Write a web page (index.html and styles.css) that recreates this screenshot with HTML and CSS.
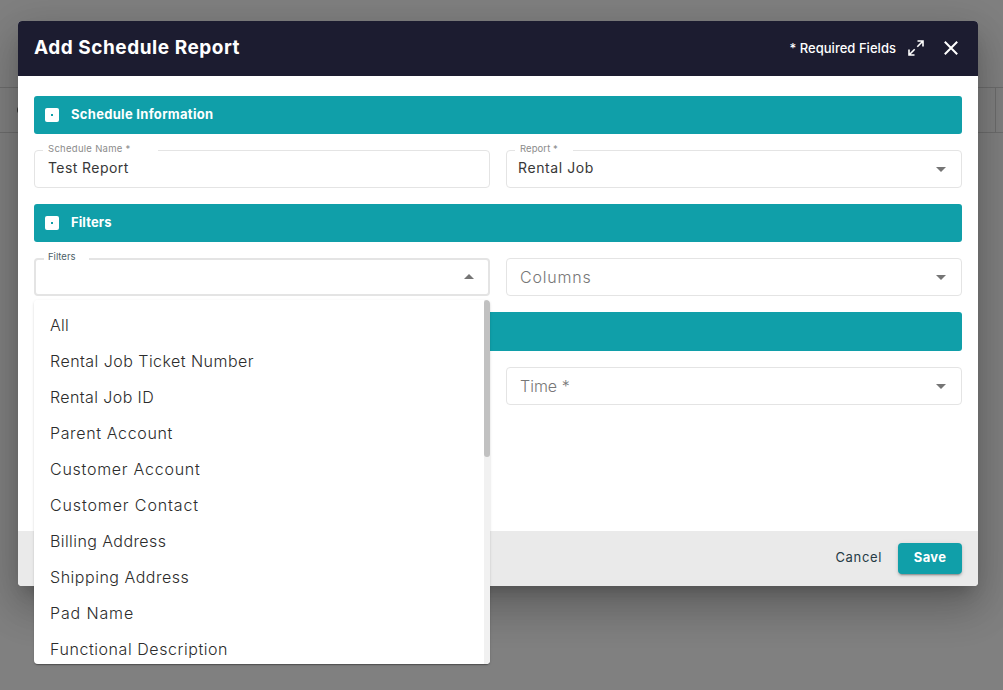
FILE: index.html
```html
<!DOCTYPE html>
<html lang="en">
<head>
<meta charset="utf-8">
<title>Add Schedule Report</title>
<link rel="stylesheet" href="styles.css">
</head>
<body>
<div class="page"><div class="page-toolbar"><span class="page-dot"></span><span class="page-cell"></span></div></div>
<main class="dialog">
  <header class="dialog-header">
    <h1 class="title">Add Schedule Report</h1>
    <span class="required">* Required Fields</span>
    <svg class="expand" viewBox="0 0 16 16"><path d="M9.500 1H15v5.500M15 1 9.300 6.700M6.500 15H1V9.500M1 15l5.700-5.700"/></svg>
    <svg class="close" viewBox="0 0 14 14"><path d="M.8.8l12.400 12.400M13.200.8.8 13.200"/></svg>
  </header>
  <div class="dialog-body">
    <h2 class="section"><span class="box"></span><span class="s-info">Schedule Information</span></h2>
    <div class="row">
      <div class="field"><label class="float w-name"><span class="l-name">Schedule Name *</span></label><span class="value v-name">Test Report</span></div>
      <div class="field"><label class="float w-report"><span class="l-report">Report *</span></label><span class="value select v-report">Rental Job</span><i class="arrow"></i></div>
    </div>
    <h2 class="section"><span class="box"></span><span class="s-filters">Filters</span></h2>
    <div class="row">
      <div class="field focused"><label class="float w-filters"><span class="l-filters">Filters</span></label><i class="arrow up"></i>
        <div class="menu">
          <ul class="options">
            <li><span class="o1">All</span></li>
            <li><span class="o2">Rental Job Ticket Number</span></li>
            <li><span class="o3">Rental Job ID</span></li>
            <li><span class="o4">Parent Account</span></li>
            <li><span class="o5">Customer Account</span></li>
            <li><span class="o6">Customer Contact</span></li>
            <li><span class="o7">Billing Address</span></li>
            <li><span class="o8">Shipping Address</span></li>
            <li><span class="o9">Pad Name</span></li>
            <li><span class="o10">Functional Description</span></li>
          </ul>
          <div class="track"><div class="thumb"></div></div>
        </div>
      </div>
      <div class="field"><span class="placeholder p-col">Columns</span><i class="arrow"></i></div>
    </div>
    <h2 class="section last"></h2>
    <div class="row">
      <div class="field"></div>
      <div class="field"><span class="placeholder p-time">Time *</span><i class="arrow"></i></div>
    </div>
  </div>
  <footer class="dialog-footer">
    <button class="cancel"><span>Cancel</span></button>
    <button class="save"><span>Save</span></button>
  </footer>
</main>
</body>
</html>
```
FILE: styles.css
```css
* { box-sizing: border-box; }
body { margin: 0; width: 1003px; height: 690px; overflow: hidden; background: #808080; font-family: Inter, "Open Sans", sans-serif; position: relative; }
.page { position: absolute; inset: 0; padding-top: 87px; }
.page-toolbar { height: 46px; border: solid #6d6d6d; border-width: 1px 0; display: flex; align-items: center; justify-content: space-between; }
.page-dot { width: 8px; height: 8px; margin-left: 17px; border-radius: 50%; background: #333; }
.page-cell { width: 8px; height: 44px; border-left: 1px solid #6d6d6d; }
.dialog { position: relative; width: 960px; height: 565px; margin: 21px 0 0 18px; display: flex; flex-direction: column; background: #fff; border-radius: 4px; box-shadow: 0 11px 15px -7px rgba(0,0,0,.2), 0 24px 38px 3px rgba(0,0,0,.14), 0 9px 46px 8px rgba(0,0,0,.12); }
.dialog-header { height: 55px; flex: none; display: flex; align-items: center; padding: 0 20px 2px 16px; background: #1c1c30; color: #fff; border-radius: 4px 4px 0 0; }
.title { margin: 0 auto 0 0; font-size: 19px; font-weight: 700; letter-spacing: .53px; white-space: nowrap; }
.required { font-size: 13px; font-weight: 500; margin-right: 12px; letter-spacing: .03px; white-space: nowrap; }
.expand { width: 16px; height: 16px; margin-right: 20px; fill: none; stroke: #fff; stroke-width: 1.600; }
.close { width: 14px; height: 14px; fill: none; stroke: #fff; stroke-width: 2; }
.dialog-body { flex: 1; padding: 20px 16px 0; display: flex; flex-direction: column; gap: 16px; }
.section { margin: 0; height: 38px; flex: none; display: flex; align-items: center; gap: 12px; padding: 0 11px; background: #109fa9; color: #fff; border-radius: 3px; font-size: 13px; font-weight: 700; white-space: nowrap; }
.s-info { letter-spacing: .3px; padding-bottom: 2px; }
.s-filters { letter-spacing: .1px; padding-bottom: 2px; }
.section.last { height: 39px; }
.box { width: 14px; height: 14px; background: #fff; border-radius: 2px; display: grid; place-items: center; }
.box::after { content: ""; width: 2px; height: 2px; background: #109fa9; }
.row { display: grid; grid-template-columns: 456px 456px; gap: 16px; }
.field { position: relative; height: 38px; border: 1px solid #e4e4e4; border-radius: 4px; display: flex; align-items: center; justify-content: space-between; padding: 0 15px 0 13px; }
.focused { border-width: 2px; justify-content: flex-end; padding: 0 14px 1px 0; }
.float { position: absolute; left: 8px; top: -8px; height: 12px; padding-left: 5px; background: #fff; font-size: 9.5px; line-height: 12px; color: #8b8b8b; white-space: nowrap; }
.focused .float { top: -9px; left: 8px; padding-left: 4px; color: #4b6168; }
.w-name { width: 115px; letter-spacing: .28px; }
.w-report { width: 58px; letter-spacing: .08px; }
.w-filters { width: 45px; }
.value { font-size: 14px; color: #383838; padding-bottom: 3px; white-space: nowrap; }
.value.select { margin-left: -2px; }
.v-name { letter-spacing: .42px; }
.v-report { letter-spacing: .6px; }
.placeholder { font-size: 16px; font-weight: 300; color: #777; white-space: nowrap; }
.p-col { letter-spacing: .8px; }
.arrow { width: 0; height: 0; border: 5px solid transparent; border-top-color: #757575; border-bottom: 0; }
.arrow.up { border: 5px solid transparent; border-bottom-color: #757575; border-top: 0; }
.menu { position: absolute; z-index: 5; left: -2px; top: 40px; width: 456px; height: 364px; display: flex; overflow: hidden; background: #fff; border-radius: 4px; }
.focused::after { content: ""; position: absolute; z-index: 4; left: -2px; top: 40px; width: 456px; height: 364px; border-radius: 4px; box-shadow: 0 2px 1px -1px rgba(0,0,0,.2), 0 1px 1px rgba(0,0,0,.14), 0 1px 3px rgba(0,0,0,.12); }
.options { list-style: none; flex: 1; margin: 0; padding: 8px 16px 0; font-size: 16px; font-weight: 300; color: #2c2c2c; }
.options li { height: 36px; line-height: 35px; white-space: nowrap; }
.o1 { letter-spacing: .3px; }
.o2 { letter-spacing: .46px; }
.o3 { letter-spacing: .4px; }
.o4 { letter-spacing: .64px; }
.o5 { letter-spacing: .74px; }
.o6 { letter-spacing: .88px; }
.o7 { letter-spacing: .42px; }
.o8 { letter-spacing: .52px; }
.o9 { letter-spacing: .86px; }
.o10 { letter-spacing: .56px; }
.track { width: 6px; background: #f1f1f1; }
.thumb { height: 157px; background: #c1c1c1; border-radius: 3px; }
.dialog-footer { height: 55px; flex: none; display: flex; align-items: center; justify-content: flex-end; gap: 16px; padding: 0 16px; background: #eaeaea; border-radius: 0 0 4px 4px; }
button { font: 400 13px Inter, "Open Sans", sans-serif; border: 0; padding: 0; }
.cancel { background: none; color: #263b46; padding-bottom: 3px; letter-spacing: .65px; }
.save { width: 64px; height: 31px; padding-bottom: 3px; background: #109fa9; color: #fff; border-radius: 4px; font-weight: 700; letter-spacing: .3px; box-shadow: 0 3px 1px -2px rgba(0,0,0,.2), 0 2px 2px rgba(0,0,0,.14), 0 1px 5px rgba(0,0,0,.12); }
```
